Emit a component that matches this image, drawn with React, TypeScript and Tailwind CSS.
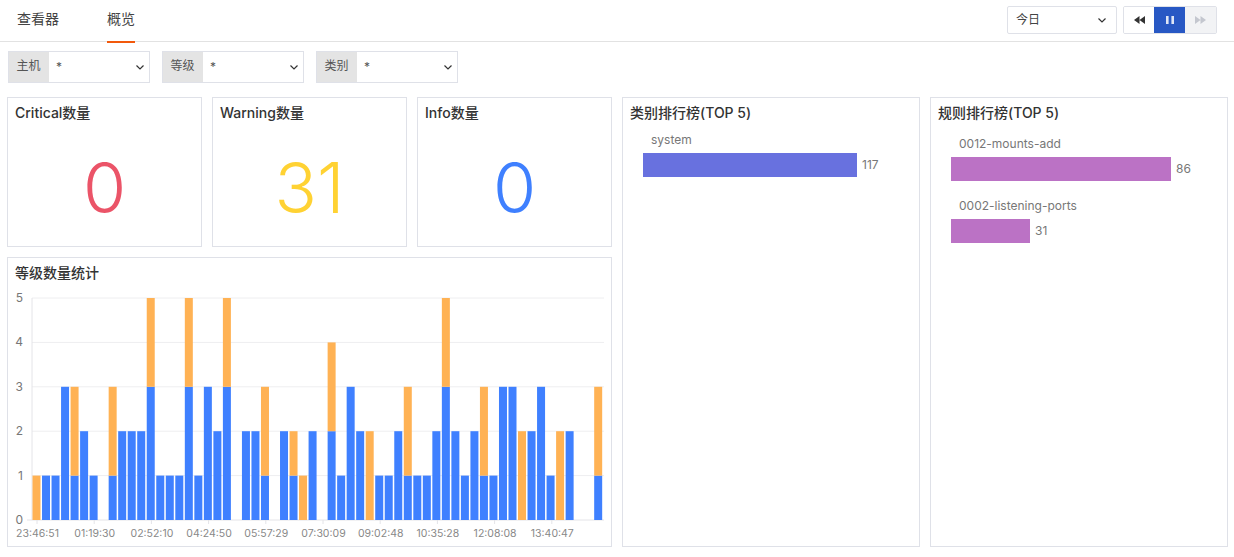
import React from "react";

const FONT = "font-['Inter','Noto_Sans_CJK_SC',sans-serif]";

const bars: [number, number][] = [
  [0,1],[1,0],[1,0],[3,0],[1,2],[2,0],[1,0],[0,0],[1,2],[2,0],
  [2,0],[2,0],[3,2],[1,0],[1,0],[1,0],[3,2],[1,0],[3,0],[2,0],
  [3,2],[0,0],[2,0],[2,0],[1,2],[0,0],[2,0],[1,1],[0,1],[2,0],
  [0,0],[2,2],[1,0],[3,0],[2,0],[0,2],[1,0],[1,0],[2,0],[1,2],
  [1,0],[1,0],[2,0],[3,2],[2,0],[1,0],[2,0],[1,2],[1,0],[3,0],
  [3,0],[0,2],[2,0],[3,0],[1,0],[0,2],[2,0],[0,0],[0,0],[1,2],
];
const ticks = ["23:46:51","01:19:30","02:52:10","04:24:50","05:57:29","07:30:09","09:02:48","10:35:28","12:08:08","13:40:47"];

function Chevron() {
  return (
    <svg width="8" height="5" viewBox="0 0 8 5" fill="none" stroke="#333" strokeWidth="1.2">
      <path d="M0.5 0.5l3.5 3.5 3.5-3.5" />
    </svg>
  );
}

function Filter({ label }: { label: string }) {
  return (
    <div className="flex h-8 w-[142px] border border-[#dfe1e8] bg-white">
      <div className="flex w-[40px] items-center justify-center bg-[#e4e4e4] pr-[1px] pb-[3px] text-xs text-[#555]">{label}</div>
      <div className="flex flex-1 items-center justify-between pr-[5px] pl-[7px] text-xs text-[#555]">
        <span>*</span>
        <Chevron />
      </div>
    </div>
  );
}

function Card({ title, className, children }: { title: string; className?: string; children?: React.ReactNode }) {
  return (
    <div className={`flex flex-col border border-[#dfe1e8] bg-white ${className ?? ""}`}>
      <div className="px-[7px] pt-[5px] text-sm leading-5 font-medium text-[#333]">{title}</div>
      {children}
    </div>
  );
}

function Stat({ title, value, color }: { title: string; value: string; color: string }) {
  return (
    <Card title={title} className="h-[150px]">
      <div className={`flex flex-1 items-center justify-center pt-[6px] text-[70px] leading-none font-[350] ${color}`}>{value}</div>
    </Card>
  );
}

function Rank({ label, value, width, color }: { label: string; value: number; width: number; color: string }) {
  return (
    <div className="flex flex-col">
      <div className="pl-[8px] text-xs leading-4 text-[#777]">{label}</div>
      <div className="mt-[5px] flex items-center">
        <div className={`h-6 ${color}`} style={{ width }} />
        <span className="ml-[5px] text-xs text-[#777]">{value}</span>
      </div>
    </div>
  );
}

function Chart() {
  const x0 = 24.5, pitch = 9.52, bw = 8, y0 = 232, unit = 44.4;
  return (
    <svg width="604" height="258" viewBox="0 0 604 258" className="block">
      {[1, 2, 3, 4, 5].map((n) => (
        <line key={n} x1="24" x2="596" y1={y0 - n * unit} y2={y0 - n * unit} stroke="#eeeef0" />
      ))}
      {[0, 1, 2, 3, 4, 5].map((n) => (
        <text key={n} x="15" y={y0 - n * unit + 4} textAnchor="end" fontSize="12" fill="#777" fontFamily="Inter, sans-serif">{n}</text>
      ))}
      <line x1="24" x2="24" y1={y0 - 5 * unit} y2={y0} stroke="#e4e4e8" />
      <line x1="19" x2="596" y1={y0} y2={y0} stroke="#e4e4e8" />
      {bars.map(([b, o], i) => {
        const x = x0 + i * pitch;
        return (
          <g key={i}>
            {b > 0 && <rect x={x} y={y0 - b * unit} width={bw} height={b * unit} fill="#3f80ff" />}
            {o > 0 && <rect x={x} y={y0 - (b + o) * unit} width={bw} height={o * unit} fill="#ffb254" />}
          </g>
        );
      })}
      {ticks.map((t, i) => {
        const x = 29 + i * 57.2;
        return (
          <g key={t}>
            <line x1={x} x2={x} y1={y0} y2={y0 + 4} stroke="#e4e4e8" />
            <text x={x + 0.5} y={y0 + 17} textAnchor="middle" fontSize="10.5" fill="#888" fontFamily="Inter, sans-serif">{t}</text>
          </g>
        );
      })}
    </svg>
  );
}

export default function App() {
  return (
    <div className={`h-[557px] w-[1234px] overflow-hidden bg-white ${FONT}`}>
      <div className="flex h-[42px] items-start justify-between border-b border-[#e2e2e2] pr-[17px] pl-[17px]">
        <div className="flex gap-12 text-sm text-[#444]">
          <div className="h-[43px] pt-[9px] leading-5">查看器</div>
          <div className="h-[43px] border-b-2 border-[#f2590c] pt-[9px] leading-5">概览</div>
        </div>
        <div className="flex gap-[6px] pt-[6px]">
          <div className="flex h-7 w-[110px] items-center justify-between rounded-[2px] border border-[#dfe1e8] pr-[10px] pl-2 text-xs text-[#444]">
            <span>今日</span>
            <Chevron />
          </div>
          <div className="flex h-7 w-[94px] overflow-hidden rounded-[2px] border border-[#dfe1e8]">
            <div className="flex w-[30px] items-center justify-center bg-white">
              <svg width="11" height="8" viewBox="0 0 11 8" fill="#333"><path d="M5.5 0v8L0 4zM11 0v8L5.5 4z" /></svg>
            </div>
            <div className="flex w-[31px] items-center justify-center bg-[#2858c4]">
              <svg width="8" height="8" viewBox="0 0 8 8" fill="#fff" opacity="0.85"><path d="M0 0h2.6v8H0zM5.4 0H8v8H5.4z" /></svg>
            </div>
            <div className="flex flex-1 items-center justify-center bg-[#f2f3f5]">
              <svg width="11" height="8" viewBox="0 0 11 8" fill="#c4c7cf"><path d="M0 0v8l5.5-4zM5.5 0v8L11 4z" /></svg>
            </div>
          </div>
        </div>
      </div>

      <div className="flex gap-3 pt-[9px] pl-2">
        <Filter label="主机" />
        <Filter label="等级" />
        <Filter label="类别" />
      </div>

      <div className="flex gap-[10px] pt-[14px] pl-[7px]">
        <div className="flex w-[605px] flex-col gap-[10px]">
          <div className="grid grid-cols-3 gap-[10px]">
            <Stat title="Critical数量" value="0" color="text-[#eb5468]" />
            <Stat title="Warning数量" value="31" color="text-[#ffd233]" />
            <Stat title="Info数量" value="0" color="text-[#3f80ff]" />
          </div>
          <Card title="等级数量统计" className="h-[290px]">
            <div className="mt-[5px]"><Chart /></div>
          </Card>
        </div>
        <Card title="类别排行榜(TOP 5)" className="h-[450px] w-[298px]">
          <div className="pt-[9px] pl-5">
            <Rank label="system" value={117} width={214} color="bg-[#6871df]" />
          </div>
        </Card>
        <Card title="规则排行榜(TOP 5)" className="h-[450px] w-[298px]">
          <div className="flex flex-col gap-[17px] pt-[13px] pl-5">
            <Rank label="0012-mounts-add" value={86} width={220} color="bg-[#bb72c5]" />
            <Rank label="0002-listening-ports" value={31} width={79} color="bg-[#bb72c5]" />
          </div>
        </Card>
      </div>
    </div>
  );
}
